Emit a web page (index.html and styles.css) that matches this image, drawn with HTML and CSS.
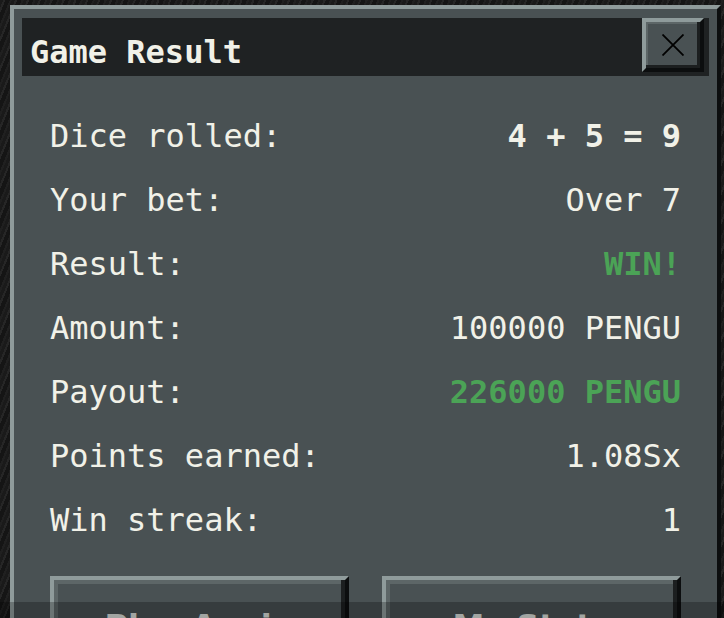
FILE: index.html
```html
<!DOCTYPE html>
<html>
<head>
<meta charset="utf-8">
<link rel="stylesheet" href="styles.css">
</head>
<body>
<div class="window">
  <div class="titlebar">
    <span class="title">Game Result</span>
    <button class="close" aria-label="Close">
      <svg width="22" height="22" viewBox="0 0 22 22"><path d="M0.5 0.5 L21.5 21.5 M21.5 0.5 L0.5 21.5" stroke="#000" stroke-width="1.8" fill="none"/></svg>
    </button>
  </div>
  <div class="rows">
    <div class="row"><span>Dice rolled:</span><span class="bold">4 + 5 = 9</span></div>
    <div class="row"><span>Your bet:</span><span>Over 7</span></div>
    <div class="row"><span>Result:</span><span class="bold green">WIN!</span></div>
    <div class="row"><span>Amount:</span><span>100000 PENGU</span></div>
    <div class="row"><span>Payout:</span><span class="bold green">226000 PENGU</span></div>
    <div class="row"><span>Points earned:</span><span>1.08Sx</span></div>
    <div class="row"><span>Win streak:</span><span>1</span></div>
  </div>
  <div class="actions">
    <button class="btn">Play Again</button>
    <button class="btn">My Stats</button>
  </div>
</div>
<div class="shade"></div>
</body>
</html>
```

FILE: styles.css
```css
html, body {
  margin: 0;
  padding: 0;
}
body {
  width: 724px;
  height: 618px;
  overflow: hidden;
  background:
    repeating-linear-gradient(112deg, #1a1a1a 0 3px, #262626 3px 5px, #151515 5px 9px, #202020 9px 11px);
  font-family: "DejaVu Sans Mono", monospace;
  color: #f1f1e8;
}
.window {
  box-sizing: border-box;
  width: 711px;
  height: 700px;
  margin: 5px 0 0 10px;
  border: 4px solid;
  border-color: #8f9b9b #0c0e0f #0c0e0f #8f9b9b;
  background: #495153;
  padding: 9px 8px 8px 8px;
}
.titlebar {
  display: flex;
  align-items: flex-start;
  justify-content: space-between;
  height: 58px;
  background: #1f2223;
  padding-right: 5px;
}
.title {
  font-weight: bold;
  font-size: 32px;
  line-height: 58px;
  padding-left: 8px;
  padding-top: 5px;
  color: #f1f1e8;
}
.close {
  box-sizing: border-box;
  width: 62px;
  height: 54px;
  margin: 0;
  padding: 0;
  background: #495153;
  border: 4px solid;
  border-color: #8f9b9b #0c0e0f #0c0e0f #8f9b9b;
  box-shadow: inset -3px -3px 0 #1c1f20, inset 2px 2px 0 #5d6667;
  display: flex;
  align-items: center;
  justify-content: center;
}
.rows {
  margin-top: 28px;
  padding: 0 28px;
  display: flex;
  flex-direction: column;
}
.row {
  display: flex;
  justify-content: space-between;
  font-size: 32px;
  line-height: 64px;
  height: 64px;
  white-space: pre;
}
.bold {
  font-weight: bold;
}
.green {
  color: #4ba356;
}
.actions {
  margin-top: 24px;
  padding: 0 28px;
  display: flex;
  gap: 33px;
}
.btn {
  box-sizing: border-box;
  flex: 1;
  height: 80px;
  margin: 0;
  background: #495153;
  border: 4px solid;
  border-color: #8f9b9b #0c0e0f #0c0e0f #8f9b9b;
  box-shadow: inset -4px -4px 0 #1c1f20, inset 4px 4px 0 #5d6667;
  font-family: "DejaVu Sans", sans-serif;
  font-weight: bold;
  font-size: 32px;
  color: #d9ddd9;
  padding-top: 20px;
}
.shade {
  position: fixed;
  left: 0;
  right: 0;
  bottom: 0;
  height: 16px;
  background: rgba(0, 0, 0, 0.25);
}
```
